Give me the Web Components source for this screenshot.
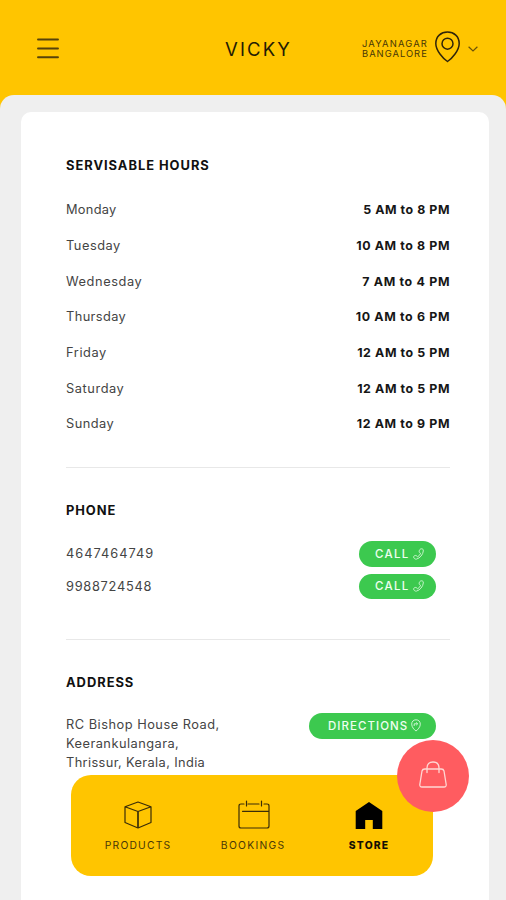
<!DOCTYPE html>
<html lang="en">
<head>
<meta charset="utf-8">
<title>Vicky</title>
<style>
html,body{margin:0;height:900px;overflow:hidden;background:#ffc500}
body{font-family:Inter,"Liberation Sans",sans-serif;color:#151515}
</style>
</head>
<body>
<store-app></store-app>
<script>
const define=(name,css,html,init)=>customElements.define(name,class extends HTMLElement{
  connectedCallback(){
    if(this.shadowRoot)return;
    const r=this.attachShadow({mode:'open'});
    r.innerHTML=`<style>${css}</style>${html}`;
    if(init)init.call(this,r);
  }
});

/* A single line of text tracked to an exact measure given by its w attribute. */
define('tracked-text',
 `:host{display:block;white-space:nowrap;width:max-content}span{display:inline-block}`,
 `<span><slot></slot></span>`,
 function(r){
  const s=r.querySelector('span'),w=parseFloat(this.getAttribute('w'));
  const n=this.textContent.length;
  const ls=(w+.3-s.getBoundingClientRect().width)/(n-1);
  s.style.letterSpacing=ls+'px';
  s.style.marginRight=-ls+'px';
 });

define('menu-icon',`:host{display:block;width:22px;height:22px}svg{display:block}`,
 `<svg width="22" height="22" fill="none" stroke="#57430a" stroke-width="1.9" stroke-linecap="round"><path d="M1 1.500H21M1 10.500H21M1 19.300H21"/></svg>`);

define('app-header',
 `:host{display:grid;grid-template-columns:188px 102px 1fr;align-items:center;height:95px;padding:2px 27px 0 37px;box-sizing:border-box}
 .t{font-size:18.5px;line-height:24px;color:#241b05}
 .loc{display:flex;align-items:center;margin-left:35px}
 .n{font-size:9.4px;line-height:10.5px;color:#493807;width:73px;padding-top:1px}
 svg{display:block;flex:none}`,
 `<menu-icon></menu-icon><tracked-text class="t" w="64.5">VICKY</tracked-text>
 <div class="loc"><div class="n"><tracked-text w="64.5">JAYANAGAR</tracked-text><tracked-text w="64.5">BANGALORE</tracked-text></div>
 <svg width="25" height="32" style="margin-top:-3px" fill="none" stroke="#30250a" stroke-width="1.5"><path d="M12.500 30.500C8 27.500 .8 19.500 .8 12.500C.8 5.500 6 1 12.500 1S24.200 5.500 24.200 12.500C24.200 19.500 17 27.500 12.500 30.500Z"/><circle cx="12.500" cy="12.700" r="5.500"/></svg>
 <svg width="10" height="6" style="margin:1px 0 0 8px" fill="none" stroke="#6b5209" stroke-width="1.2"><path d="M.6 .7L5 4.900L9.400 .7"/></svg></div>`);

define('info-section',
 `:host{display:block;border-bottom:1px solid #e8e8e8;box-sizing:border-box}
 :host([last]){border:0}
 h2{margin:0;font-size:12.900px;line-height:20px;font-weight:700;color:#111}`,
 `<h2><slot name="title"></slot></h2><slot></slot>`);

define('hours-row',
 `:host{display:flex;justify-content:space-between;align-items:center;height:35.65px;font-size:12.800px;line-height:20px}
 .d{color:#444;font-weight:400}.h{font-weight:700;font-size:12.400px;color:#161616}`,
 ``,
 function(r){
  const g=k=>this.getAttribute(k);
  r.innerHTML+=`<tracked-text class="d" w="${g('dw')}">${g('day')}</tracked-text><tracked-text class="h" w="${g('hw')}">${g('hours')}</tracked-text>`;
 });

define('pill-button',
 `:host{display:flex;align-items:center;height:25.500px;border-radius:13px;background:#3cc94f;color:#effff0;font-size:11.500px;line-height:16px;font-weight:500;box-sizing:border-box;padding-left:16px;width:76.500px}
 :host([wide]){width:127px;padding-left:19.500px}
 svg{display:block;margin-left:5px}:host([wide]) svg{margin-left:4px}`,
 `<slot></slot>`,
 function(r){
  r.innerHTML+=this.hasAttribute('wide')
  ?`<svg width="10" height="13" fill="none" stroke="#d9f8dc" stroke-width=".9"><path d="M5 12C3 10.600 .7 8 .7 5.100C.7 2.500 2.500 .8 5 .8S9.300 2.500 9.300 5.100C9.300 8 7 10.600 5 12Z"/><path d="M3.200 7V4.800H6.500M5.200 3.400L6.700 4.800L5.200 6.200"/></svg>`
  :`<svg width="11" height="12" fill="none" stroke="#c9f4ce" stroke-width=".95" stroke-linejoin="round"><path d="M8.300 .8C9.700 .6 10.500 1.500 10.300 3C10 6.500 7 10.200 3.500 11.100C2.100 11.400 .8 10.400 .6 9.100C.5 8.300 1.200 7.700 2.100 7.500C3.200 7.200 4.100 8 4.500 8.900C6 8.100 7 6.800 7.600 5.300C6.600 5 6 4.200 6.200 3C6.400 1.800 7.200 .9 8.300 .8Z"/></svg>`;
 });

define('phone-row',
 `:host{display:flex;justify-content:space-between;align-items:center;height:25.500px;margin-bottom:7px;padding-right:14px;font-size:12.800px;color:#444}`,
 `<slot></slot><pill-button><tracked-text w="33">CALL</tracked-text></pill-button>`);

define('nav-item',
 `:host{display:flex;flex-direction:column;align-items:center;font-size:10.300px;line-height:14px;color:#483707}
 :host([active]){font-weight:800;color:#141004}
 .i{height:30px;display:flex;align-items:flex-end;margin-bottom:9px}
 ::slotted(svg){display:block}`,
 `<div class="i"><slot name="icon"></slot></div><slot></slot>`);

define('bottom-nav',
 `:host{position:absolute;left:70.500px;top:775px;width:362.500px;height:101px;box-sizing:border-box;border-radius:20px;background:#ffc500;display:grid;grid-template-columns:134px 96px 136px;padding:23.500px 0 0 0}
 svg{display:block}`,
 `<nav-item><svg slot="icon" width="28" height="28" fill="none" stroke="#3a2d08" stroke-width="1.200" stroke-linejoin="round"><path d="M14 1L27 5.700V21.500L14 27L1 21.500V5.700ZM1 5.700L14 10.500L27 5.700"/><path d="M14 10.500V27" stroke-width="1.700"/></svg><tracked-text w="65">PRODUCTS</tracked-text></nav-item>
 <nav-item><svg slot="icon" style="margin-left:3px" width="32" height="29" fill="none" stroke="#3a2d08" stroke-width="1.200" stroke-linecap="round"><path d="M6 4H3Q1 4 1 6V26Q1 28 3 28H29Q31 28 31 26V6Q31 4 29 4H26M10 4H21M4.500 11.300H30.500M8.500 1V6M23.500 1V6"/></svg><tracked-text w="63">BOOKINGS</tracked-text></nav-item>
 <nav-item active><svg slot="icon" width="28" height="27"><path d="M14 0L27.300 9V27H17.800V18H10.200V27H.7V9Z" fill="#000"/></svg><tracked-text w="39">STORE</tracked-text></nav-item>`);

define('cart-button',
 `:host{position:absolute;left:396.500px;top:739.500px;width:72px;height:72px;border-radius:50%;background:#ff5c60;display:flex;align-items:center;justify-content:center}svg{display:block;margin-top:-2px}`,
 `<svg width="28" height="27" fill="none" stroke="#ffd8d3" stroke-width="1.300" stroke-linecap="round" stroke-linejoin="round"><path d="M5.700 8H22.300Q24.500 8 25 10L27.200 23.500Q27.400 26 25 26H3Q.6 26 .8 23.500L3 10Q3.500 8 5.700 8ZM8 11.500V7C8 3 10.300 1 14 1S20 3 20 7V11.500"/></svg>`);

define('store-app',
 `:host{display:block;position:relative;width:506px;height:900px;overflow:hidden;background:#ffc500}
 main{height:805px;box-sizing:border-box;background:#efefef;border-radius:14px 14px 0 0;padding:17px 17px 0 21px}
 .card{height:788px;box-sizing:border-box;background:#fff;border-radius:10px 10px 0 0;padding:44px 39.500px 0 45px}
 .hours{height:311.500px}.hours .rows{margin-top:16.500px}
 .phone{height:172px;padding-top:33px}.phone .rows{margin-top:20.500px}
 .addr{padding-top:33px}.addr .row{display:flex;justify-content:space-between;align-items:flex-start;margin-top:20.500px;padding-right:14px}
 .a{font-size:12.800px;line-height:19px;color:#444;padding-top:2px}`,
 `<app-header></app-header>
 <main><div class="card">
 <info-section class="hours"><tracked-text slot="title" w="142.500">SERVISABLE HOURS</tracked-text><div class="rows">
 <hours-row day="Monday" dw="50" hours="5 AM to 8 PM" hw="86"></hours-row>
 <hours-row day="Tuesday" dw="54" hours="10 AM to 8 PM" hw="93"></hours-row>
 <hours-row day="Wednesday" dw="75.500" hours="7 AM to 4 PM" hw="87"></hours-row>
 <hours-row day="Thursday" dw="59.500" hours="10 AM to 6 PM" hw="93.500"></hours-row>
 <hours-row day="Friday" dw="40" hours="12 AM to 5 PM" hw="92"></hours-row>
 <hours-row day="Saturday" dw="57.500" hours="12 AM to 5 PM" hw="92"></hours-row>
 <hours-row day="Sunday" dw="47.500" hours="12 AM to 9 PM" hw="92.500"></hours-row></div></info-section>
 <info-section class="phone"><tracked-text slot="title" w="49">PHONE</tracked-text><div class="rows">
 <phone-row><tracked-text w="87">4647464749</tracked-text></phone-row>
 <phone-row><tracked-text w="85">9988724548</tracked-text></phone-row></div></info-section>
 <info-section class="addr" last><tracked-text slot="title" w="67">ADDRESS</tracked-text><div class="row">
 <div class="a"><tracked-text w="153">RC Bishop House Road,</tracked-text><tracked-text w="112.500">Keerankulangara,</tracked-text><tracked-text w="138.500">Thrissur, Kerala, India</tracked-text></div>
 <pill-button wide><tracked-text w="79">DIRECTIONS</tracked-text></pill-button></div></info-section>
 </div></main>
 <bottom-nav></bottom-nav><cart-button></cart-button>`);
</script>
</body>
</html>
